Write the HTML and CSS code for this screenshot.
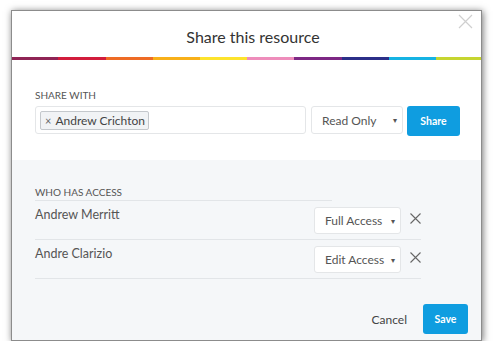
FILE: index.html
```html
<!DOCTYPE html>
<html lang="en">
<head>
    <meta charset="UTF-8">
    <meta name="viewport" content="width=device-width, initial-scale=1.0">
    <title>Share this resource</title>
    <link rel="stylesheet" href="styles.css">
</head>
<body>
    <div class="dialog">
        <!-- Header -->
        <div class="dialog-header">
            <h1>Share this resource</h1>
            <button class="close" aria-label="Close">
                <svg width="15" height="15" viewBox="0 0 15 15"><path d="M1 1L14 14M14 1L1 14" stroke="#cfcfcf" stroke-width="1.2" fill="none"/></svg>
            </button>
        </div>
        <div class="stripe">
            <span class="c1"></span><span class="c2"></span><span class="c3"></span><span class="c4"></span><span class="c5"></span>
            <span class="c6"></span><span class="c7"></span><span class="c8"></span><span class="c9"></span><span class="c10"></span>
        </div>

        <!-- Share with -->
        <div class="share-section">
            <div class="label">Share with</div>
            <div class="share-row">
                <div class="people-input">
                    <span class="tag"><span class="tag-x">×</span>Andrew Crichton</span>
                </div>
                <div class="select select-wide"><span>Read Only</span><span class="caret">▾</span></div>
                <button class="btn-primary btn-share">Share</button>
            </div>
        </div>

        <!-- Who has access -->
        <div class="access-section">
            <div class="label access-heading">Who has access</div>
            <div class="access-row">
                <div class="name">Andrew Merritt</div>
                <div class="select"><span>Full Access</span><span class="caret">▾</span></div>
                <button class="remove" aria-label="Remove">
                    <svg width="11" height="11" viewBox="0 0 11 11"><path d="M0.5 0.5L10.5 10.5M10.5 0.5L0.5 10.5" stroke="#666" stroke-width="1.1" fill="none"/></svg>
                </button>
            </div>
            <div class="access-row">
                <div class="name">Andre Clarizio</div>
                <div class="select"><span>Edit Access</span><span class="caret">▾</span></div>
                <button class="remove" aria-label="Remove">
                    <svg width="11" height="11" viewBox="0 0 11 11"><path d="M0.5 0.5L10.5 10.5M10.5 0.5L0.5 10.5" stroke="#666" stroke-width="1.1" fill="none"/></svg>
                </button>
            </div>

            <div class="dialog-footer">
                <button class="btn-link">Cancel</button>
                <button class="btn-primary btn-save">Save</button>
            </div>
        </div>
    </div>
</body>
</html>
```

FILE: styles.css
```css
body {
    font-family: Lato, "Open Sans", Arial, sans-serif;
    margin: 0;
    padding: 10px 0 0 11px;
    background-color: #fff;
    color: #555;
}

button {
    font-family: inherit;
    cursor: pointer;
}

.dialog {
    width: 471px;
    height: 331px;
    box-sizing: border-box;
    border: 1px solid #8c8c8c;
    box-shadow: 1px 1px 7px rgba(0, 0, 0, 0.55);
    background-color: #fff;
    display: flex;
    flex-direction: column;
    position: relative;
}

/* Header */
.dialog-header {
    height: 46px;
    box-sizing: border-box;
    padding: 16px 0 0 13px;
    text-align: center;
}

.dialog-header h1 {
    margin: 0;
    font-size: 16px;
    line-height: 20px;
    font-weight: 400;
    color: #333;
}

.close {
    position: absolute;
    top: 3px;
    right: 8px;
    padding: 0;
    border: none;
    background: none;
    width: 15px;
    height: 15px;
}

.stripe {
    display: flex;
    height: 3px;
}

.stripe span { flex: 1; }
.stripe .c1 { background-color: #8f2455; flex: 0.98; }
.stripe .c2 { background-color: #d21c3c; }
.stripe .c3 { background-color: #ee6b25; }
.stripe .c4 { background-color: #f8b019; }
.stripe .c5 { background-color: #fde32d; }
.stripe .c6 { background-color: #ee8dbb; }
.stripe .c7 { background-color: #7d2884; }
.stripe .c8 { background-color: #2b2f88; }
.stripe .c9 { background-color: #16b3e3; }
.stripe .c10 { background-color: #c6d530; flex: 0.95; }

/* Share with */
.label {
    font-size: 10px;
    line-height: 13px;
    text-transform: uppercase;
    color: #555;
}

.share-section {
    height: 100px;
    box-sizing: border-box;
    padding: 29px 0 0 23px;
}

.share-section .label {
    margin-bottom: 4px;
}

.share-row {
    display: flex;
    align-items: flex-start;
    gap: 5px;
}

.people-input {
    width: 271px;
    height: 28px;
    box-sizing: border-box;
    border: 1px solid #e4e6e8;
    border-radius: 3px;
    padding: 2px 4px;
    display: flex;
    align-items: center;
}

.tag {
    display: inline-flex;
    align-items: center;
    height: 19px;
    box-sizing: border-box;
    padding: 0 3px 0 4px;
    border: 1px solid #c4c8cc;
    border-radius: 2px;
    background-color: #f1f3f5;
    font-size: 12px;
    color: #444;
}

.tag-x {
    font-size: 11px;
    color: #666;
    margin-right: 4px;
}

.select {
    width: 87px;
    height: 27px;
    box-sizing: border-box;
    border: 1px solid #e4e6e8;
    border-radius: 3px;
    background-color: #fff;
    padding: 0 5px 0 10px;
    display: flex;
    align-items: center;
    justify-content: space-between;
    font-size: 12px;
    color: #555;
}

.select-wide {
    width: 92px;
    height: 28px;
}

.caret {
    font-size: 8px;
    color: #555;
}

.btn-primary {
    border: none;
    border-radius: 3px;
    background-color: #0f9de0;
    color: #fff;
    font-size: 10.5px;
    font-weight: 700;
    padding: 0;
}

.btn-share {
    width: 53px;
    height: 30px;
    margin-left: -1px;
}

/* Who has access */
.access-section {
    flex: 1;
    background-color: #f5f7f9;
    padding: 26px 0 0 23px;
    display: flex;
    flex-direction: column;
}

.access-heading {
    width: 297px;
    padding-bottom: 1px;
    border-bottom: 1px solid #e2e5e8;
}

.access-row {
    width: 386px;
    display: flex;
    align-items: flex-start;
    padding: 6px 0 5px;
    border-bottom: 1px solid #e2e5e8;
}

.access-row .name {
    flex: 1;
    font-size: 12.5px;
    line-height: 16px;
    color: #555;
}

.remove {
    border: none;
    background: none;
    padding: 0;
    margin: 6px 0 0 9px;
    width: 11px;
    height: 11px;
    display: flex;
}

.dialog-footer {
    margin-top: auto;
    display: flex;
    align-items: center;
    justify-content: flex-end;
    gap: 16px;
    padding: 0 13px 6px 0;
}

.btn-link {
    border: none;
    background: none;
    padding: 0;
    font-size: 12px;
    color: #444;
}

.btn-save {
    width: 45px;
    height: 30px;
}
```
